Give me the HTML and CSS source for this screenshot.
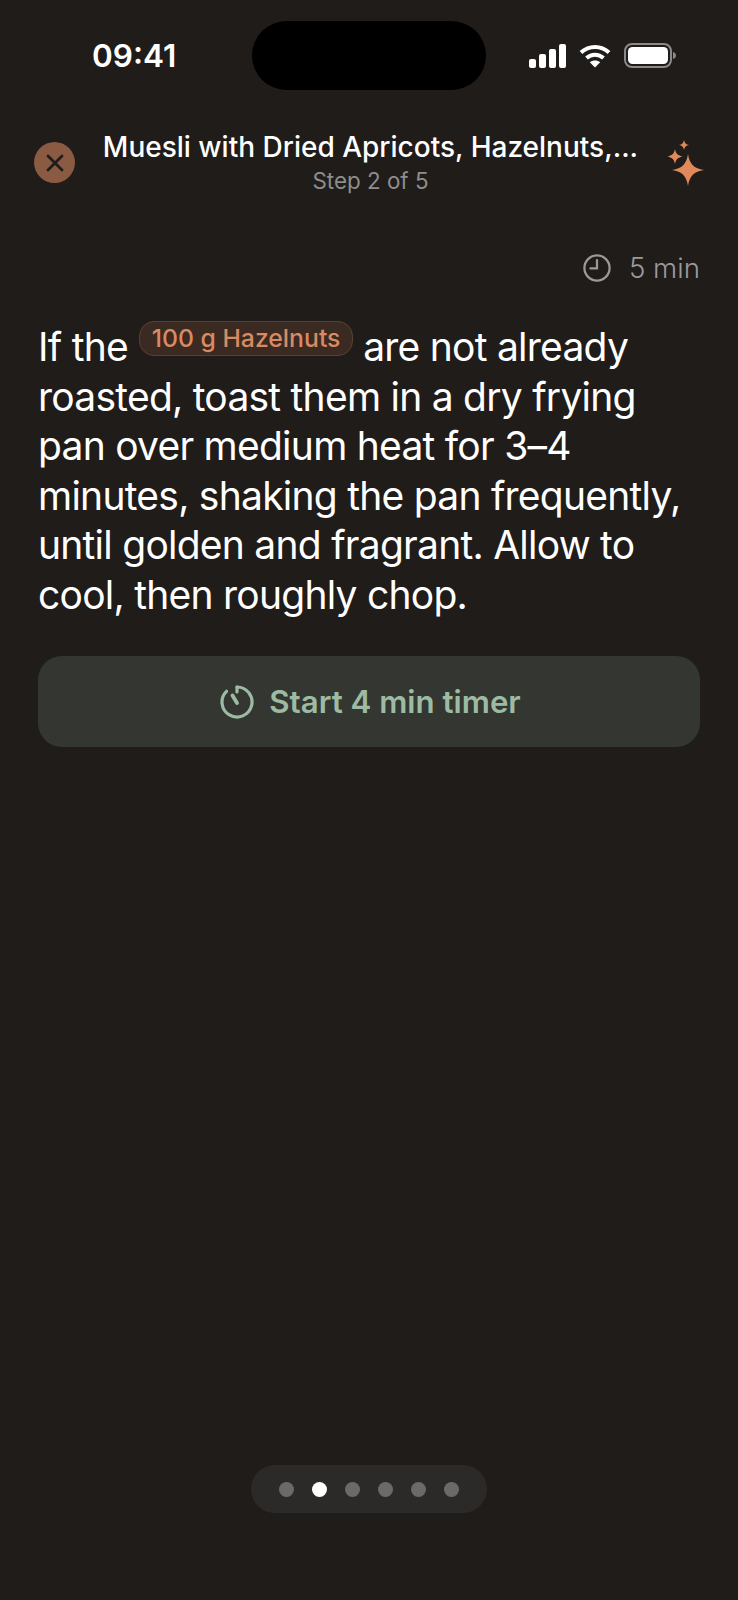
FILE: index.html
```html
<!DOCTYPE html>
<html lang="en">
<head>
    <meta charset="UTF-8">
    <title>Cooking Step</title>
    <link rel="stylesheet" href="styles.css">
</head>
<body>
    <div class="screen">
        <div class="status-bar">
            <span class="time">09:41</span>
            <div class="island"></div>
            <div class="status-icons">
                <svg width="37" height="24" viewBox="0 0 37 24" fill="#fff">
                    <rect x="0" y="15" width="7" height="9" rx="2"/>
                    <rect x="10" y="10" width="7" height="14" rx="2"/>
                    <rect x="20" y="5" width="7" height="19" rx="2"/>
                    <rect x="30" y="0" width="7" height="24" rx="2"/>
                </svg>
                <svg width="32" height="24" viewBox="0 0 32 24" fill="none" stroke="#fff" stroke-width="4">
                    <path d="M2 8.500C10 1 22 1 30 8.500"/>
                    <path d="M7.500 14C12.500 9.500 19.500 9.500 24.500 14"/>
                    <path d="M16 23.500L10.800 18.300C13.500 15.800 18.500 15.800 21.200 18.300Z" fill="#fff" stroke="none"/>
                </svg>
                <svg width="52" height="25" viewBox="0 0 52 25" fill="none">
                    <rect x="1" y="1" width="46" height="23" rx="7" stroke="#8a8a8a" stroke-width="2"/>
                    <rect x="4" y="4" width="40" height="17" rx="4.500" fill="#fff"/>
                    <path d="M49 9C51 9.500 52 11 52 12.500S51 15.500 49 16Z" fill="#8a8a8a"/>
                </svg>
            </div>
        </div>

        <div class="header">
            <div class="close-btn">
                <svg width="20" height="20" viewBox="0 0 20 20" stroke="#1f1c1a" stroke-width="2.800" stroke-linecap="round">
                    <path d="M3 3L17 17M17 3L3 17"/>
                </svg>
            </div>
            <div class="header-text">
                <div class="title">Muesli with Dried Apricots, Hazelnuts,...</div>
                <div class="subtitle">Step 2 of 5</div>
            </div>
            <svg class="sparkles" width="38" height="46" viewBox="0 0 38 46" fill="#e08a5c">
                <path d="M22 14C23.500 24 28 28.500 38 30C28 31.500 23.500 36 22 46C20.500 36 16 31.500 6 30C16 28.500 20.500 24 22 14Z"/>
                <path d="M9 9C9.800 13.500 12 15.700 17 16.500C12 17.300 9.800 19.500 9 24C8.200 19.500 6 17.300 1 16.500C6 15.700 8.200 13.500 9 9Z"/>
                <path d="M18 0C18.500 3 20 4.500 23 5C20 5.500 18.500 7 18 10C17.500 7 16 5.500 13 5C16 4.500 17.500 3 18 0Z"/>
            </svg>
        </div>

        <div class="duration">
            <svg width="28" height="28" viewBox="0 0 30 30" fill="none" stroke="#9a9a9a" stroke-width="2.400">
                <circle cx="15" cy="15" r="13.500"/>
                <path d="M15 6.500V15.500H8" stroke-linecap="round"/>
            </svg>
            <span>5 min</span>
        </div>

        <p class="step-text">If the <span class="pill">100 g Hazelnuts</span> are not already roasted, toast them in a dry frying pan over medium heat for 3–4 minutes, shaking the pan frequently, until golden and fragrant. Allow to cool, then roughly chop.</p>

        <div class="timer-btn">
            <svg width="34" height="34" viewBox="0 0 34 34" fill="none" stroke="#9dbba3" stroke-width="3.200" stroke-linecap="round">
                <path d="M17 2A15 15 0 1 1 6.500 6.300"/>
                <path d="M17 2V7"/>
                <path d="M12.500 10.500L17 18" stroke-width="3.800"/>
            </svg>
            <span>Start 4 min timer</span>
        </div>

        <div class="pager">
            <span class="dot"></span>
            <span class="dot active"></span>
            <span class="dot"></span>
            <span class="dot"></span>
            <span class="dot"></span>
            <span class="dot"></span>
        </div>
    </div>
</body>
</html>
```

FILE: styles.css
```css
* {
    box-sizing: border-box;
}

body {
    margin: 0;
    background-color: #1f1c1a;
    font-family: Inter, "Liberation Sans", sans-serif;
    color: #fff;
}

.screen {
    display: flex;
    flex-direction: column;
    height: 1600px;
    padding: 21px 38px 87px;
}

.status-bar {
    display: flex;
    align-items: center;
    height: 69px;
    margin: 0 -38px;
    padding-left: 92px;
}

.time {
    width: 160px;
    font-size: 31.500px;
    font-weight: 600;
}

.island {
    width: 234px;
    height: 69px;
    background-color: #000;
    border-radius: 35px;
}

.status-icons {
    display: flex;
    align-items: center;
    gap: 13px;
    margin-left: 43px;
}

.header {
    display: flex;
    align-items: center;
    margin: 39px -4px 0 -4px;
}

.close-btn {
    display: flex;
    align-items: center;
    justify-content: center;
    flex: none;
    width: 41px;
    height: 41px;
    margin-top: 1px;
    background-color: #8a5a42;
    border-radius: 50%;
}

.header-text {
    flex: 1;
    text-align: center;
}

.title {
    font-size: 28px;
    font-weight: 500;
    line-height: 36px;
}

.subtitle {
    margin-top: 2px;
    font-size: 22.400px;
    line-height: 28px;
    color: #8f8d8b;
}

.sparkles {
    flex: none;
    margin-top: 1px;
}

.duration {
    display: flex;
    align-items: center;
    justify-content: flex-end;
    gap: 18px;
    margin-top: 56px;
    font-size: 27.700px;
    font-weight: 300;
    color: #9a9a9a;
}

.step-text {
    margin: 37px 0 0;
    font-size: 39px;
    line-height: 49.500px;
    letter-spacing: -0.750px;
    color: #fff;
}

.pill {
    display: inline-block;
    padding: 0 11.500px;
    margin: -12px 0 0 1px;
    vertical-align: 14px;
    font-size: 24.750px;
    font-weight: 500;
    line-height: 33px;
    letter-spacing: 0;
    color: #d98a62;
    background-color: #3a2a22;
    border: 1px solid #5a4033;
    border-radius: 15px;
}

.timer-btn {
    display: flex;
    align-items: center;
    justify-content: center;
    gap: 15px;
    height: 91px;
    margin-top: 37px;
    padding-left: 3px;
    font-size: 31.250px;
    font-weight: 600;
    color: #9dbba3;
    background-color: #343731;
    border-radius: 24px;
}

.pager {
    display: flex;
    align-items: center;
    gap: 18.200px;
    align-self: center;
    height: 48px;
    margin-top: auto;
    padding: 0 28px;
    background-color: #2b2a29;
    border-radius: 24px;
}

.dot {
    width: 15px;
    height: 15px;
    background-color: #6b6a69;
    border-radius: 50%;
}

.dot.active {
    background-color: #fff;
}
```
